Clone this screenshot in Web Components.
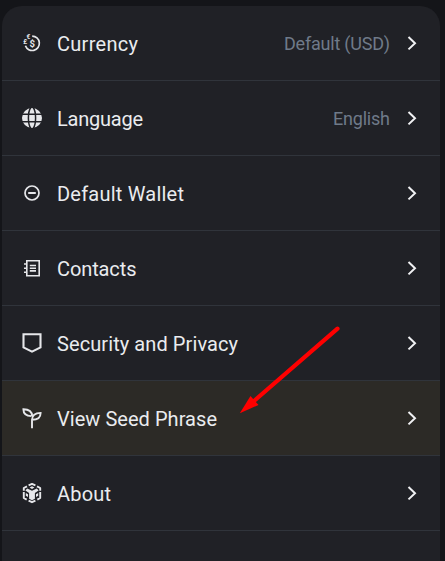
<!DOCTYPE html>
<html lang="en">
<head>
<meta charset="utf-8">
<title>Settings</title>
<style>
html, body { margin: 0; height: 100%; overflow: hidden; background: #141519; }
</style>
</head>
<body>
<settings-panel>
  <settings-row label="Currency" fit="81" value="Default (USD)" value-fit="106" icon="currency"></settings-row>
  <settings-row label="Language" fit="86" value="English" value-fit="57" icon="globe"></settings-row>
  <settings-row label="Default Wallet" fit="127" icon="wallet"></settings-row>
  <settings-row label="Contacts" fit="79.5" icon="contacts"></settings-row>
  <settings-row label="Security and Privacy" fit="181" icon="shield"></settings-row>
  <settings-row label="View Seed Phrase" fit="160" icon="seed" active></settings-row>
  <settings-row label="About" fit="54" icon="about"></settings-row>
  <pointer-arrow slot="overlay"></pointer-arrow>
</settings-panel>
<script>
const ICONS = {
  currency: `<path d="M10.2 3.1A7.2 7.2 0 1 1 3.4 12.8" fill="none" stroke="currentColor" stroke-width="1.7"/>
    <text x="10.2" y="13.5" text-anchor="middle" font-size="9.5" font-weight="700">$</text>
    <text x="6.4" y="5.6" text-anchor="middle" font-size="6.5" font-weight="700">€</text>
    <text x="3.2" y="11.2" text-anchor="middle" font-size="6.5" font-weight="700">£</text>`,
  globe: `<circle cx="10" cy="10" r="10" fill="currentColor"/>
    <g fill="none" stroke="#202126" stroke-width="1.5"><path d="M0 6.3H20M0 13.7H20"/><path d="M8.8 -.5C5.6 4 5.6 16 8.8 20.5M11.2 -.5C14.4 4 14.4 16 11.2 20.5"/></g>`,
  wallet: `<circle cx="10" cy="10" r="7" fill="none" stroke="currentColor" stroke-width="1.7"/><path d="M6.2 10H13.8" stroke="currentColor" stroke-width="2"/>`,
  contacts: `<path d="M4.8 2.8H17.2V17.7H4.8Z" fill="none" stroke="currentColor" stroke-width="1.6"/>
    <path d="M2 6H5M2 10.2H5M2 14.3H5" stroke="currentColor" stroke-width="1.6"/>
    <path d="M7.8 7.5H14M7.8 10.2H14M7.8 12.9H14" stroke="currentColor" stroke-width="1.6"/>`,
  shield: `<path d="M1.5 1.3H18.5V14.4L10 18.6L1.5 14.4Z" fill="none" stroke="currentColor" stroke-width="2.1"/>`,
  seed: `<g fill="none" stroke="currentColor" stroke-width="1.9"><path d="M10 20.3V11.8C10 7.4 13 4.9 18.6 4.9C18.6 9.6 16 11.8 10 11.8"/><path d="M10.3 8.3C10 3.6 6.7 1.3 1.4 1.3C1.4 5.6 4 8 9.4 8.1"/></g>`,
  about: `<g fill="none" stroke="currentColor" stroke-width="1.9" stroke-linejoin="round">
      <path d="M6.6 2.4L10 .9L13.4 2.4M15 3.3L18.2 5V7.8M18.2 9V15L15.3 16.6M13.4 17.6L10 19.2L6.6 17.6M4.7 16.6L1.8 15V9M1.8 7.8V5L5 3.3"/></g>
    <path d="M10 3.3L12.4 4.6L10 5.9L7.6 4.6Z" fill="currentColor"/>
    <path d="M5.2 5.5L10 7.8L14.8 5.5L16.6 7.5L12.9 10V15.7L10 17.2L7.1 15.7V10L3.4 7.5Z" fill="currentColor"/>
    <path d="M3.8 10.1L6 11.3V13.9L3.8 12.7ZM16.2 10.1L14 11.3V13.9L16.2 12.7Z" fill="currentColor"/>`
};

customElements.define('row-icon', class extends HTMLElement {
  connectedCallback() {
    this.attachShadow({ mode: 'open' }).innerHTML = `
      <style>
        :host { display: block; flex: none; width: 20px; height: 20px; color: #e6e7ea; }
        svg { display: block; overflow: visible; }
        text { fill: currentColor; font-family: Roboto, "Liberation Sans", sans-serif; }
      </style>
      <svg width="20" height="20" viewBox="0 0 20 20">${ICONS[this.getAttribute('name')]}</svg>`;
  }
});

customElements.define('settings-row', class extends HTMLElement {
  connectedCallback() {
    const value = this.getAttribute('value');
    const root = this.attachShadow({ mode: 'open' });
    root.innerHTML = `
      <style>
        :host { display: flex; align-items: center; box-sizing: border-box; height: 75px;
          padding: 0 22px 0 20px; border-bottom: 1px solid #30343b;
          font-family: Roboto, "Liberation Sans", sans-serif; }
        :host([active]) { background: #2c2a26; }
        .label { margin-left: 15px; padding-top: 2px; font-size: 20px; line-height: 26px; color: #eaecef; white-space: nowrap; }
        .value { margin-left: auto; padding-top: 2px; font-size: 18px; line-height: 24px; color: #6f7a89; white-space: nowrap; }
        .chevron { display: block; flex: none; margin-left: auto; }
        .value + .chevron { margin-left: 16px; }
      </style>
      <row-icon name="${this.getAttribute('icon')}"></row-icon>
      <span class="label">${this.getAttribute('label')}</span>
      ${value ? `<span class="value">${value}</span>` : ''}
      <svg class="chevron" width="12" height="16" viewBox="0 0 12 16"><path d="M2.5 2L9 8.2L2.5 14.4" fill="none" stroke="#f0f1f3" stroke-width="2"/></svg>`;
    this.fit(root.querySelector('.label'), this.getAttribute('fit'));
    if (value) this.fit(root.querySelector('.value'), this.getAttribute('value-fit'));
  }
  /* Spreads or tightens the letters so the text takes the given width. */
  fit(el, width) {
    const n = el.textContent.length;
    const gap = (Number(width) - el.getBoundingClientRect().width) / (n - 1);
    el.style.letterSpacing = gap + 'px';
    el.style.marginRight = -gap + 'px';
  }
});

customElements.define('pointer-arrow', class extends HTMLElement {
  connectedCallback() {
    this.attachShadow({ mode: 'open' }).innerHTML = `
      <style>
        :host { position: absolute; left: 238px; top: 320px; width: 106px; height: 96px; pointer-events: none; }
        svg { display: block; }
      </style>
      <svg width="106" height="96" viewBox="0 0 106 96">
        <path d="M99.5 8.7L16 81" stroke="#fe0000" stroke-width="4.2" stroke-linecap="round"/>
        <path d="M1.8 93.2L12.5 76L20.5 85Z" fill="#fe0000"/>
      </svg>`;
  }
});

customElements.define('settings-panel', class extends HTMLElement {
  connectedCallback() {
    this.attachShadow({ mode: 'open' }).innerHTML = `
      <style>
        :host { display: block; box-sizing: border-box; height: 561px; padding: 6px 5px 0 2px; }
        .card { height: 555px; border-radius: 20px 20px 0 0; background: #202126; overflow: hidden; }
      </style>
      <div class="card"><slot></slot></div><slot name="overlay"></slot>`;
  }
});
</script>
</body>
</html>
